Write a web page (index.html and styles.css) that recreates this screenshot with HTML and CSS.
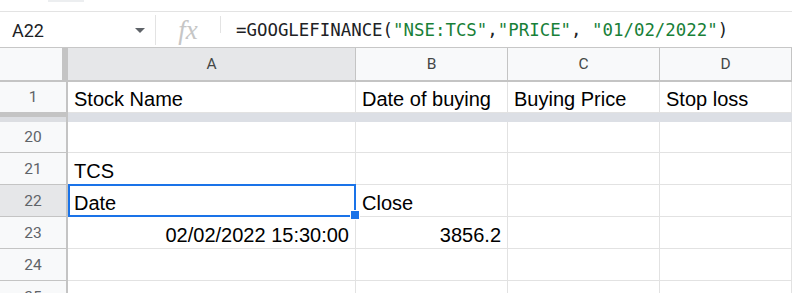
FILE: index.html
```html
<!DOCTYPE html>
<html lang="en">
<head>
    <meta charset="UTF-8">
    <title>Stocks sheet</title>
    <link rel="stylesheet" href="styles.css">
</head>
<body>

    <div class="top-strip"><span class="tab"></span></div>

    <div class="formula-bar">
        <div class="name-box">
            <span class="cell-ref">A22</span>
            <span class="caret"></span>
        </div>
        <div class="fx">fx</div>
        <div class="formula">=GOOGLEFINANCE(<span class="str">"NSE:TCS"</span>,<span class="str">"PRICE"</span>, <span class="str">"01/02/2022"</span>)</div>
    </div>

    <div class="sheet">
        <!-- column headers -->
        <div class="corner"></div>
        <div class="col-head active">A</div>
        <div class="col-head">B</div>
        <div class="col-head">C</div>
        <div class="col-head">D</div>

        <!-- frozen row -->
        <div class="row-head">1</div>
        <div class="cell">Stock Name</div>
        <div class="cell">Date of buying</div>
        <div class="cell">Buying Price</div>
        <div class="cell">Stop loss</div>

        <div class="freeze-head"></div>
        <div class="freeze-bar"></div>

        <div class="row-head">20</div>
        <div class="cell"></div>
        <div class="cell"></div>
        <div class="cell"></div>
        <div class="cell"></div>

        <div class="row-head">21</div>
        <div class="cell">TCS</div>
        <div class="cell"></div>
        <div class="cell"></div>
        <div class="cell"></div>

        <div class="row-head active">22</div>
        <div class="cell selected">Date<span class="handle"></span></div>
        <div class="cell">Close</div>
        <div class="cell"></div>
        <div class="cell"></div>

        <div class="row-head">23</div>
        <div class="cell num">02/02/2022 15:30:00</div>
        <div class="cell num">3856.2</div>
        <div class="cell"></div>
        <div class="cell"></div>

        <div class="row-head">24</div>
        <div class="cell"></div>
        <div class="cell"></div>
        <div class="cell"></div>
        <div class="cell"></div>

        <div class="row-head">25</div>
        <div class="cell"></div>
        <div class="cell"></div>
        <div class="cell"></div>
        <div class="cell"></div>
    </div>

</body>
</html>
```

FILE: styles.css
```css
* {
    box-sizing: border-box;
}

body {
    margin: 0;
    width: 792px;
    height: 293px;
    overflow: hidden;
    background-color: #fff;
    font-family: "Liberation Sans", Arial, sans-serif;
}

/* toolbar remnant above the formula bar */
.top-strip {
    height: 12px;
    border-bottom: 1px solid #e3e3e3;
    padding-left: 48px;
}

.tab {
    display: block;
    width: 36px;
    height: 2px;
    background-color: #eceef0;
}

.formula-bar {
    display: flex;
    height: 36px;
    border-bottom: 1px solid #c7c7c7;
}

.name-box {
    width: 156px;
    display: flex;
    align-items: center;
    justify-content: space-between;
    padding: 0 10px 0 12px;
    border-right: 1px solid #e3e3e3;
    margin: 3px 0 2px;
}

.cell-ref {
    font-family: Roboto, sans-serif;
    font-size: 18px;
    color: #202124;
}

.caret {
    width: 0;
    height: 0;
    border-left: 5px solid transparent;
    border-right: 5px solid transparent;
    border-top: 5px solid #5f6368;
}

.fx {
    width: 65px;
    display: flex;
    align-items: center;
    justify-content: center;
    font-family: "Liberation Serif", serif;
    font-style: italic;
    font-size: 27px;
    color: #c6c6c6;
    border-right: 1px solid #e3e3e3;
    margin: 4px 0 14px;
    padding-top: 10px;
    line-height: 10px;
}

.formula {
    display: flex;
    align-items: center;
    padding-left: 15px;
    font-family: "DejaVu Sans Mono", monospace;
    font-size: 17.4px;
    color: #202124;
    white-space: pre;
}

.str {
    color: #188038;
}

/* grid */
.sheet {
    display: grid;
    grid-template-columns: 68px 288px 152px 152px 1fr;
    grid-template-rows: 34px 31px 9px 31px 32px 32px 32px 32px 32px;
    height: 245px;
    overflow: hidden;
}

.corner {
    background-color: #f8f9fa;
    border-right: 6px solid #c4c4c4;
    border-bottom: 2px solid #c4c4c4;
}

.col-head {
    display: flex;
    align-items: center;
    justify-content: center;
    background-color: #f8f9fa;
    border-right: 1px solid #c4c4c4;
    border-bottom: 2px solid #c4c4c4;
    font-family: Roboto, sans-serif;
    font-size: 15.5px;
    color: #444746;
}

.col-head.active {
    background-color: #e6e7e9;
}

.row-head {
    display: flex;
    align-items: center;
    justify-content: center;
    background-color: #f8f9fa;
    border-right: 2px solid #c4c4c4;
    border-bottom: 1px solid #c4c4c4;
    font-family: Roboto, sans-serif;
    font-size: 15.5px;
    color: #5f6368;
}

.row-head.active {
    background-color: #e6e7e9;
}

.freeze-head {
    background-color: #dcdee2;
    border-top: 4px solid #c4c4c4;
    border-right: 2px solid #c4c4c4;
}

.freeze-bar {
    grid-column: 2 / -1;
    background-color: #dcdfe5;
}

.cell {
    position: relative;
    display: flex;
    align-items: flex-end;
    padding: 0 6px 3px;
    border-right: 1px solid #e2e2e2;
    border-bottom: 1px solid #e2e2e2;
    font-size: 20px;
    line-height: 20px;
    color: #000;
    white-space: nowrap;
}

.cell.num {
    justify-content: flex-end;
}

/* active cell outline */
.cell.selected::after {
    content: "";
    position: absolute;
    top: -1px;
    left: 0;
    right: -1px;
    bottom: -1px;
    border: 2px solid #1a73e8;
}

.handle {
    position: absolute;
    right: -5px;
    bottom: -4px;
    width: 10px;
    height: 10px;
    background-color: #1a73e8;
    border: 1px solid #fff;
    z-index: 1;
}
```
